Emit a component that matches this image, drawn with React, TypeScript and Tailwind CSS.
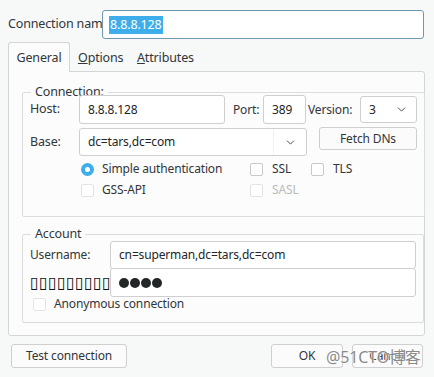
import { ChevronDown } from 'lucide-react';

const font = { fontFamily: '"Noto Sans", "Noto Sans CJK SC", sans-serif' };

function Box({ disabled }: { disabled?: boolean }) {
  return (
    <span
      className={`inline-block w-[13px] h-[13px] rounded-[2px] border bg-white ${
        disabled ? 'border-[#e4e4e4]' : 'border-[#c9c9c9]'
      }`}
    />
  );
}

function Radio() {
  return (
    <span className="inline-flex items-center justify-center w-[13px] h-[13px] rounded-full bg-[#3daee9]">
      <span className="w-[5px] h-[5px] rounded-full bg-white" />
    </span>
  );
}

function Field({ className, children }: { className: string; children?: React.ReactNode }) {
  return (
    <div
      className={`flex items-center bg-white border border-[#cfcfcf] rounded-[3px] pl-[8px] text-[#232627] ${className}`}
    >
      {children}
    </div>
  );
}

export default function App() {
  return (
    <div
      className="relative w-[434px] h-[377px] bg-[#f7f9f9] text-[12px] tracking-[-0.15px] text-[#31363b] overflow-hidden"
      style={font}
    >
      <div className="flex items-center pt-[10px] pl-[8px]">
        <span className="w-[94px] overflow-hidden whitespace-nowrap text-[12.5px]">Connection name</span>
        <div className="flex items-center w-[322px] h-[29px] bg-white border border-[#6e98b0] rounded-[3px] pl-[6px] text-[12.5px]">
          <span className="bg-[#3daee9] text-white px-[1px] leading-[18px]">8.8.8.128</span>
        </div>
      </div>

      <div className="flex items-end mt-[3px] pl-[8px] h-[30px] text-[12.5px]">
        <div className="relative z-10 w-[62px] h-[30px] flex items-center justify-center pt-[1px] bg-[#fcfcfc] border border-b-0 border-[#d5d5d5] rounded-t-[3px]">
          General
        </div>
        <div className="w-[67px] h-[29px] flex items-center pl-[8px] pt-[2px]">
          <span>
            <span className="underline">O</span>ptions
          </span>
        </div>
        <div className="h-[29px] flex items-center pt-[2px]">
          <span>
            <span className="underline">A</span>ttributes
          </span>
        </div>
      </div>

      <div className="ml-[8px] mt-[-1px] w-[417px] h-[265px] bg-[#fcfcfc] border border-[#d5d5d5] rounded-b-[3px] rounded-tr-[3px] pl-[13px] pt-[12px]">
        <fieldset className="w-[398px] h-[133px] border border-[#dcdcdc] rounded-[2px] px-[7px]">
          <legend className="px-[4px] ml-[1px] leading-[16px] text-[12.5px]">Connection:</legend>
          <div className="flex items-center mt-[-5px]">
            <span className="w-[49px] text-[12.5px]">Host:</span>
            <Field className="w-[146px] h-[29px]">8.8.8.128</Field>
            <span className="ml-[8px] w-[30px]">Port:</span>
            <Field className="w-[43px] h-[29px] pl-[6px]">389</Field>
            <span className="ml-[2px] w-[52px]">Version:</span>
            <Field className="w-[57px] h-[27px] justify-between pr-[8px]">
              <span>3</span>
              <ChevronDown size={13} strokeWidth={1.8} className="text-[#4d4d4d]" />
            </Field>
          </div>
          <div className="flex items-start mt-[4px]">
            <span className="w-[49px] leading-[28px] text-[12.5px]">Base:</span>
            <Field className="w-[228px] h-[28px] justify-between pr-[9px]">
              <span>dc=tars,dc=com</span>
              <span className="flex items-center h-full pl-[10px] border-l border-[#f0f0f0]">
                <ChevronDown size={13} strokeWidth={1.8} className="text-[#4d4d4d]" />
              </span>
            </Field>
            <button className="ml-[12px] mt-[-1px] w-[98px] h-[23px] bg-[#fbfbfb] border border-[#cfcfcf] rounded-[3px] text-[#31363b]">
              Fetch DNs
            </button>
          </div>
          <div className="grid grid-cols-[169px_61px_auto] ml-[51px] mt-[5px] gap-y-[5px]">
            <div className="flex items-center gap-[8px] h-[16px]">
              <Radio />
              <span>Simple authentication</span>
            </div>
            <div className="flex items-center gap-[9px] h-[16px]">
              <Box />
              <span>SSL</span>
            </div>
            <div className="flex items-center gap-[9px] h-[16px]">
              <Box />
              <span>TLS</span>
            </div>
            <div className="flex items-center gap-[8px] h-[16px]">
              <Box disabled />
              <span>GSS-API</span>
            </div>
            <div className="flex items-center gap-[9px] h-[16px] text-[#b8bbbe]">
              <Box disabled />
              <span>SASL</span>
            </div>
          </div>
        </fieldset>

        <fieldset className="mt-[9px] w-[398px] h-[97px] border border-[#dcdcdc] rounded-[2px] px-[7px]">
          <legend className="px-[4px] ml-[1px] leading-[16px] text-[12.5px]">Account</legend>
          <div className="flex flex-col mt-[-1px]">
            <div className="flex items-center">
              <span className="w-[80px]">Username:</span>
              <Field className="w-[306px] h-[28px]">cn=superman,dc=tars,dc=com</Field>
            </div>
            <div className="flex items-center mt-[-1px]">
              <span
                className="w-[80px] whitespace-nowrap text-[#111] tracking-[0.2px]"
                style={{ fontFamily: '"DejaVu Sans", sans-serif', fontSize: '16px' }}
              >
                ▯▯▯▯▯▯▯▯▯
              </span>
              <Field className="w-[306px] h-[29px] gap-[1px] text-[#232627]">
                {[0, 1, 2, 3].map((i) => (
                  <span key={i} className="w-[10px] h-[10px] rounded-full bg-[#232627]" />
                ))}
              </Field>
            </div>
            <div className="flex items-center gap-[8px] ml-[3px] mt-[-2px]">
              <Box disabled />
              <span>Anonymous connection</span>
            </div>
          </div>
        </fieldset>
      </div>

      <div className="flex items-center mt-[8px] px-[11px]">
        <button className="w-[116px] h-[24px] bg-[#fbfbfb] border border-[#cfcfcf] rounded-[3px]">
          Test connection
        </button>
        <div className="flex-1" />
        <button className="w-[72px] h-[24px] bg-[#fbfbfb] border border-[#cfcfcf] rounded-[3px]">
          OK
        </button>
        <button className="ml-[9px] w-[71px] h-[24px] bg-[#fbfbfb] border border-[#cfcfcf] rounded-[3px]">
          Cancel
        </button>
      </div>

      <span className="absolute left-[326px] top-[345px] text-[16px] text-[#8a8a8a] [text-shadow:0_0_2px_#fff,0_0_2px_#fff]">
        @51CTO博客
      </span>
    </div>
  );
}
